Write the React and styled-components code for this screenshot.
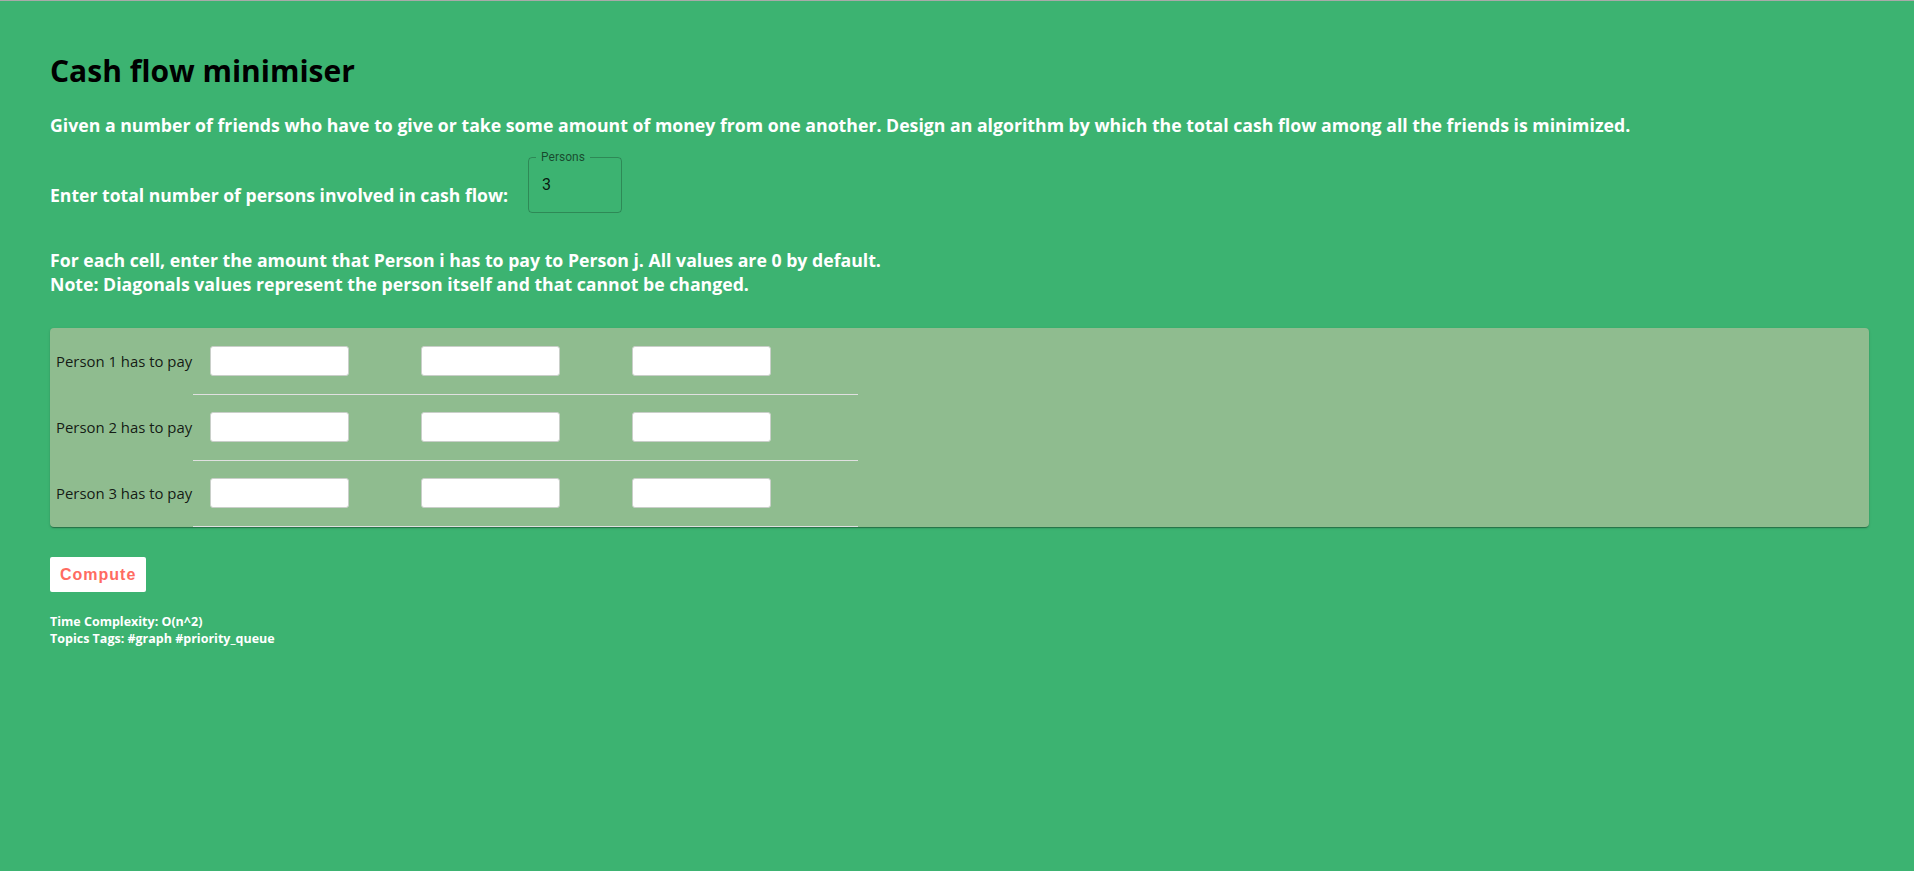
import React from "react";
import styled, { createGlobalStyle } from "styled-components";

const GlobalStyle = createGlobalStyle`
  html, body { margin: 0; padding: 0; }
  body {
    background: #3cb371;
    font-family: "Open Sans", "Noto Sans", sans-serif;
  }
`;

const Page = styled.div`
  min-height: 100vh;
  box-sizing: border-box;
  border-top: 1px solid #a9aaa9;
  background: #3cb371;
  padding: 0 45px 40px 50px;
`;

const Title = styled.h1`
  margin: 50px 0 0;
  font-size: 30px;
  line-height: 39px;
  font-weight: 700;
  color: #000;
`;

const Lead = styled.p`
  margin: ${(p) => p.$top}px 0 0;
  font-size: 17.7px;
  line-height: 24px;
  font-weight: 700;
  color: #fff;
  white-space: nowrap;
`;

const CountRow = styled.div`
  display: flex;
  align-items: flex-start;
  gap: 20px;
  margin-top: 13px;
`;

const CountLabel = styled.span`
  margin-top: 33px;
  font-size: 17.6px;
  line-height: 24px;
  font-weight: 700;
  color: #fff;
`;

const Outline = styled.fieldset`
  margin: 0;
  padding: 0;
  width: 94px;
  box-sizing: border-box;
  min-width: 0;
  border: 1px solid rgba(0, 0, 0, 0.23);
  border-radius: 4px;
`;

const OutlineLegend = styled.legend`
  margin-left: 7px;
  padding: 0 5px;
  font-family: Roboto, "Liberation Sans", sans-serif;
  font-size: 12px;
  line-height: 14px;
  color: rgba(0, 0, 0, 0.6);
`;

const CountInput = styled.input`
  display: block;
  box-sizing: border-box;
  width: 100%;
  height: 42px;
  margin: 0 0 6px;
  padding: 0 0 0 13px;
  border: 0;
  outline: none;
  background: transparent;
  font-family: Roboto, "Liberation Sans", sans-serif;
  font-size: 16px;
  line-height: 42px;
  color: rgba(0, 0, 0, 0.87);
`;

const Instructions = styled.div`
  margin-top: 35px;
  font-size: 17.7px;
  line-height: 24px;
  font-weight: 700;
  color: #fff;
`;

const Paper = styled.div`
  margin-top: 32px;
  background: #8fbc8f;
  border-radius: 4px;
  box-shadow: 0px 2px 1px -1px rgba(0, 0, 0, 0.2), 0px 1px 1px 0px rgba(0, 0, 0, 0.14),
    0px 1px 3px 0px rgba(0, 0, 0, 0.12);
  overflow: hidden;
`;

const Table = styled.table`
  border-collapse: collapse;
  border-spacing: 0;
`;

const HeadCell = styled.th`
  height: 66px;
  padding: 0 1px 0 6px;
  text-align: left;
  vertical-align: middle;
  font-weight: 400;
  font-size: 14.9px;
  color: rgba(0, 0, 0, 0.87);
  white-space: nowrap;
`;

const Cell = styled.td`
  box-sizing: border-box;
  width: ${(p) => p.$w}px;
  height: 66px;
  padding: 0 0 0 17px;
  vertical-align: middle;
  border-bottom: 1px solid #e0e0e0;
`;

const AmountInput = styled.input`
  display: block;
  box-sizing: border-box;
  width: 139px;
  height: 30px;
  margin: 0;
  padding: 0 6px;
  border: 1px solid #c9cfc9;
  border-radius: 3px;
  background: #fff;
  font-family: "Open Sans", sans-serif;
  font-size: 14px;
  outline: none;
`;

const ComputeButton = styled.button`
  display: block;
  margin-top: 30px;
  height: 35px;
  padding: 0 10px;
  border: 0;
  border-radius: 2px;
  background: #fff;
  font-family: "Liberation Sans", Arial, sans-serif;
  font-size: 16px;
  font-weight: 700;
  letter-spacing: 1px;
  line-height: 35px;
  color: #ff6b61;
  cursor: pointer;
`;

const Meta = styled.div`
  margin-top: 21.5px;
  font-size: 12.5px;
  line-height: 17px;
  font-weight: 700;
  color: #fff;
`;

const persons = [1, 2, 3];

export default function App() {
  return (
    <>
      <GlobalStyle />
      <Page>
        <Title>Cash flow minimiser</Title>
        <Lead $top={23}>
          Given a number of friends who have to give or take some amount of money from one another. Design an
          algorithm by which the total cash flow among all the friends is minimized.
        </Lead>
        <CountRow>
          <CountLabel>Enter total number of persons involved in cash flow:</CountLabel>
          <Outline>
            <OutlineLegend>Persons</OutlineLegend>
            <CountInput defaultValue="3" />
          </Outline>
        </CountRow>
        <Instructions>
          For each cell, enter the amount that Person i has to pay to Person j. All values are 0 by default.
          <br />
          Note: Diagonals values represent the person itself and that cannot be changed.
        </Instructions>
        <Paper>
          <Table>
            <tbody>
              {persons.map((p) => (
                <tr key={p}>
                  <HeadCell>Person {p} has to pay</HeadCell>
                  {persons.map((q) => (
                    <Cell key={q} $w={211}>
                      <AmountInput aria-label={`Person ${p} pays Person ${q}`} />
                    </Cell>
                  ))}
                  <Cell $w={32} />
                </tr>
              ))}
            </tbody>
          </Table>
        </Paper>
        <ComputeButton>Compute</ComputeButton>
        <Meta>
          Time Complexity: O(n^2)
          <br />
          Topics Tags: #graph #priority_queue
        </Meta>
      </Page>
    </>
  );
}
